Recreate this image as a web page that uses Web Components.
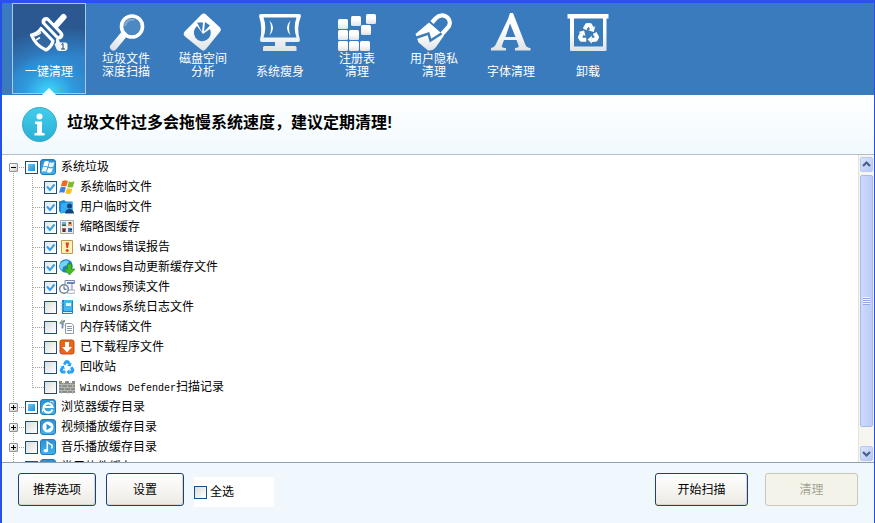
<!DOCTYPE html>
<html lang="zh-CN">
<head>
<meta charset="utf-8">
<title>垃圾清理</title>
<style>
html,body{margin:0;height:100%}
body{font:12px/20px "Liberation Sans","Noto Sans CJK SC",sans-serif;color:#000;overflow:hidden}
</style>
</head>
<body>
<cleaner-window>
  <tool-bar slot="toolbar">
    <tool-item icon="brush" active>一键清理</tool-item>
    <tool-item icon="lens">垃圾文件<br>深度扫描</tool-item>
    <tool-item icon="disk">磁盘空间<br>分析</tool-item>
    <tool-item icon="slim">系统瘦身</tool-item>
    <tool-item icon="registry">注册表<br>清理</tool-item>
    <tool-item icon="lock">用户隐私<br>清理</tool-item>
    <tool-item icon="font">字体清理</tool-item>
    <tool-item icon="bin">卸载</tool-item>
  </tool-bar>
  <info-banner slot="banner">垃圾文件过多会拖慢系统速度，建议定期清理!</info-banner>
  <tree-view slot="tree">
    <tree-item label="系统垃圾" icon="sys" state="mixed" open>
      <tree-item child label="系统临时文件" icon="flag" state="on"></tree-item>
      <tree-item child label="用户临时文件" icon="user" state="on"></tree-item>
      <tree-item child label="缩略图缓存" icon="thumbs" state="on"></tree-item>
      <tree-item child label="Windows错误报告" icon="error" state="on"></tree-item>
      <tree-item child label="Windows自动更新缓存文件" icon="update" state="on"></tree-item>
      <tree-item child label="Windows预读文件" icon="prefetch" state="on"></tree-item>
      <tree-item child label="Windows系统日志文件" icon="log"></tree-item>
      <tree-item child label="内存转储文件" icon="dump"></tree-item>
      <tree-item child label="已下载程序文件" icon="down"></tree-item>
      <tree-item child label="回收站" icon="recycle"></tree-item>
      <tree-item child last label="Windows Defender扫描记录" icon="wall"></tree-item>
    </tree-item>
    <tree-item label="浏览器缓存目录" icon="ie" state="mixed"></tree-item>
    <tree-item label="视频播放缓存目录" icon="video"></tree-item>
    <tree-item label="音乐播放缓存目录" icon="music"></tree-item>
    <tree-item label="常用软件缓存" icon="apps"></tree-item>
  </tree-view>
  <action-bar slot="actions">
    <push-button>推荐选项</push-button>
    <push-button>设置</push-button>
    <select-all>全选</select-all>
    <push-button slot="end" wide>开始扫描</push-button>
    <push-button slot="end" wide disabled>清理</push-button>
  </action-bar>
</cleaner-window>

<script>
const svg=(box,body)=>`<svg viewBox="0 0 ${box} ${box}" width="${box}" height="${box}" aria-hidden="true">${body}</svg>`;
const arrows=(cx,cy,s,fill)=>[0,120,240].map(r=>`<g transform="translate(${cx} ${cy}) rotate(${r}) scale(${s})"><path d="M-3.400-4.200-1.300-7.800H1.300L3-4.900" fill="none" stroke="${fill}" stroke-width="3.600" stroke-linejoin="round"/><path d="M5.800-6.700 4.600-1.800-.2-3.200z" fill="${fill}"/></g>`).join('');
const grad=`<defs><linearGradient id="g" x1="0" y1="0" x2="0" y2="1"><stop offset=".4" stop-color="#fff"/><stop offset="1" stop-color="#dfe3e6"/></linearGradient></defs>`;
const BIG={
brush:`<path d="M26 13.500 34.500 4" stroke="#fff" stroke-width="6" stroke-linecap="round"/>
<path d="m17 8.500 13 13.500" stroke="#fff" stroke-width="9" stroke-linecap="round"/>
<path d="m17.500 9 12 12.500" stroke="#2f629c" stroke-width="2.600" stroke-linecap="round"/>
<path d="m12 15.500 12 12.500c-1 4-3.500 7-7 9-6.500-3-12-8-14.500-15 3.500-1 7.500-3 9.500-6.500z" fill="#33659e" stroke="#fff" stroke-width="3.200" stroke-linejoin="round"/>
<path d="m5 23c3-.5 5.500-2 7-3.500M7 27l4-2.500" stroke="#fff" stroke-width="1.500" fill="none"/>
<path d="M27 26c1-1 2.500-.5 3 1l1 2.500h5c2 0 2.500 1 2.500 3v3c0 1.500-1.500 2.500-3 2.500h-5c-2 0-3-1.500-3.500-3l-1.500-4 1.500-1z" fill="#f4f8fb"/>
<path d="m32.500 31.500 1.500-1v5.500m-2 0h4" stroke="#246" fill="none"/>`,
lens:`<circle cx="26" cy="13.500" r="10.500" fill="#4c88c3" stroke="#fff" stroke-width="3.600"/><path d="M19 13a7 7 0 0 1 9-6" stroke="#80aad4" stroke-width="2" fill="none"/><path d="M17.500 22 7.500 34" stroke="url(#g2)" stroke-width="7" stroke-linecap="round"/><defs><linearGradient id="g2" gradientUnits="userSpaceOnUse" x1="17" y1="20" x2="6" y2="36"><stop stop-color="#fff"/><stop offset="1" stop-color="#dde1e6"/></linearGradient></defs>`,
disk:grad+`<path d="M18.500 1.500q2.500-2 5 .5l13 12q2.500 2.500.3 5L23 36q-2.500 3-5 .5L2 23.500q-2.500-2.500-.3-5z" fill="url(#g)"/><path d="M14 13A8.500 8.500 0 1 0 27 16L20 21z" fill="#3a7cba"/><path d="M19 19 14 9.500h6zM21 18.500 22 9l5 3.500z" fill="#3a7cba"/>`,
slim:grad+`<path d="M-1 3q0-2 2-2h38q2 0 2 2-5 12-1 24 0 2-2 2H25.500v4H35q1.500 0 1.500 1.500V38H3v-3.500Q3 33 4.500 33H15v-4H2q-2 0-2-2Q3 15-1 3z" fill="url(#g)"/><path d="M3.500 4.500h33q-3.500 10 0 20h-33q3.500-10 0-20z" fill="#3a7cba"/><path d="M9.500 7.500q7 7 0 15 3-7.500 0-15zM30.500 7.500q-7 7 0 15-3-7.500 0-15z" fill="#fff"/>`,
registry:grad+[[1,6],[14,3],[29,1],[1,17],[12,17],[24,12],[1,28],[12,28],[23,28]].map(([x,y])=>`<rect x="${x}" y="${y}" width="10" height="10" rx="1.500" fill="url(#g)"/>`).join(''),
lock:grad+`<path d="M18 9.500 21.500 5.500c4-4 9-4 12-1s3.500 7-.5 11L28 21" fill="none" stroke="#fff" stroke-width="4.200"/><path d="M1.500 21 15 9.500 30 22.500 22 34q-3 4-8 3.500L4.500 29.500z" fill="url(#g)"/><path d="M0 25.500 14.500 20.500 16.500 27.500 27.500 20.500" fill="none" stroke="#3a7cba" stroke-width="2.400"/>`,
font:grad+`<path fill-rule="evenodd" fill="url(#g)" d="m22 0 12.500 32q1 2.500 5 3v2.500H24V35q4.500 0 3.500-2.500L25.500 27H13l-2 5.500q-1 2.500 4 2.500v2.500H0V35q3.500-.5 5-4L17 6l2-6zM19 10.500 14.500 24h10z"/>`,
bin:grad+`<path d="M-.5 1h41v4.500h-2V37q0 1-1 1H3q-1 0-1-1V5.500H-.5z" fill="url(#g)"/><path d="M6 5.500h29v28H6z" fill="#3a7cba"/>`+arrows(20.5,21,1.150,'#fff')
};
const tile=`<defs><linearGradient id="t" x1="0" y1="0" x2="0" y2="1"><stop stop-color="#2f8fd2"/><stop offset="1" stop-color="#3db4ec"/></linearGradient></defs><rect x=".5" y=".5" width="15" height="15" rx="2.500" fill="url(#t)" stroke="#2879b8"/>`;
const flag=(a,b,c,d)=>`<path fill="${a}" d="M3.500 2.500q2.500-1.500 5 0L7 7.500q-2.500-1-5 0z"/><path fill="${b}" d="M9.200 3q2.500 1 5.300-.3L13 8q-2.500 1-5 0z"/><path fill="${c}" d="M1.800 8.500q2.500-1.300 4.800 0L5.200 13.300q-2.400-1.200-4.800 0z"/><path fill="${d}" d="M7.600 9q2.500 1.200 5 .2l-1.300 4.500q-2.600 1.200-5.200 0z"/>`;
const SMALL={
sys:tile+`<g transform="translate(1.200 .5) scale(.92)">${flag('#fff','#e9f6ff','#eef8ff','#fff')}</g>`,
flag:`<g transform="translate(-.4 -.8) scale(1.100)">${flag('#ed6a22','#7dbb2d','#3c83dc','#f8bf22')}</g>`,
user:`<path d="M0 2.500 5 1l2 1.500h6.500V13L2 14.500 0 12z" fill="#1c87d8"/><path d="M2 4.500 13.500 3v10L2 14z" fill="#35aeed"/><circle cx="10.500" cy="7" r="2.500" fill="#14437d"/><path d="M6 14.500q.5-4.500 4.500-4.500t4.500 4.500z" fill="#14437d"/>`,
thumbs:`<path d="M1.500 1.500h13v13h-13z" fill="#eee" stroke="#aaa"/><path d="M3 3h4v4H3z" fill="#69b8d8"/><path d="M9 3h4v4H9z" fill="#e9a07c"/><path d="M3 9h4v4H3z" fill="#c66a55"/><path d="M9 9h4v4H9z" fill="#3e79be"/><path d="M3 5.500h4V7H3zM10 3h2v2h-2z" fill="#335f43"/><path d="M4 10h2v3H4zM11 10h2v1h-2z" fill="#243b6c"/>`,
error:`<path d="M2.500 1.500h11v13h-11z" fill="#fff3bd" stroke="#c09a4c"/><path d="M6.500 3.500h3.500L9 9H7.500z" fill="#e3401c"/><circle cx="8.200" cy="11.500" r="1.500" fill="#e3401c"/>`,
update:`<circle cx="7" cy="7" r="6.800" fill="#217fcb"/><path d="M1 5q4-5 9-3L8 6 4 8 3 12Q0 9 1 5z" fill="#74d2fa"/><path d="M8.500 5h4v5H16l-5.500 6L5 10h3.500z" fill="#44bd23" stroke="#258b16" stroke-width=".6"/>`,
prefetch:`<path d="M6 1.500h9.500v3H13v9H6z" fill="#f3f6fb" stroke="#7888a7"/><path d="M8 3h7v2H8z" fill="#6687bb"/><path d="M8 11h8v3q-4 1-8 0z" fill="#fff" stroke="#8391aa" stroke-width=".7"/><circle cx="5" cy="10" r="4.300" fill="#fff" stroke="#6c8193" stroke-width="1.400"/><path d="M5 7.200v3h2.500" stroke="#356" fill="none"/>`,
log:`<path d="M3 1h10q1 0 1 1v12q0 1-1 1H3z" fill="#1987cb"/><path d="M5 1h8v11H5z" fill="#43b7ee"/><path d="M7 4h5v3H7z" fill="#e8f8ff"/><path d="M1.500 4h3m-3 3h3m-3 3h3" stroke="#80b8dd"/><path d="M4 13.500h9" stroke="#dff4ff"/>`,
dump:`<path d="M6.500 4.500h6l2 2v8h-8z" fill="#fff" stroke="#8f9aaa"/><path d="M8 7.500h5m-5 2h5m-5 2h5" stroke="#8798b0"/><path d="M3.500 9.500V5Q3.500 2 6 2" stroke="#778da1" stroke-width="1.800" fill="none"/><path d="M0 4.500 3.500 0v3.500L6 6.500z" fill="#8b9baa"/>`,
down:`<rect x="1" y="1" width="14" height="14" rx="2" fill="#e9651c" stroke="#c64d11"/><path d="M6 3h4v5h3l-5 5.500L3 8h3z" fill="#fff"/>`,
recycle:arrows(8,9,.8,'#279ff4'),
wall:`<path d="M0 2h3v2h3V2h4v2h3V2h3v12H0z" fill="#8c8e8c"/><path d="M0 5.500h16M0 8.500h16M0 11.500h16M4.500 3v3m7-3v3M2.500 6v3m6-3v3m5-3v3m-8 0v3m6-3v3m-9 0v3m6-3v3m5-3v3" stroke="#bdbeb8" stroke-width=".8"/>`,
ie:tile+`<path d="M12.500 10.500A4.600 4.600 0 1 1 12.600 8H5" fill="none" stroke="#fff" stroke-width="2.200"/><path d="M3 13Q1 12 5 7M10 3q4-2 3 1.500" stroke="#fff" fill="none"/>`,
video:tile+`<circle cx="8" cy="8" r="5.500" fill="#fff"/><path d="m6.500 4.800 4.800 3.200-4.800 3.200z" fill="#2797dc"/>`,
music:tile+`<path d="M7.300 11V3q3 2.500 4.700 3 .8 2-.7 3.500" fill="none" stroke="#fff" stroke-width="1.500"/><ellipse cx="5.800" cy="11.700" rx="2.300" ry="1.600" fill="#fff"/>`,
apps:tile+`<path d="M4 3.500h8v9H4z" fill="#fff"/>`
};
const CHECK=`
input{appearance:none;flex:none;box-sizing:border-box;width:13px;height:13px;margin:0;border:1px solid #1c4d86;background:linear-gradient(135deg,#dcdcd7,#fff)}
input:checked{background:url("data:image/svg+xml,%3Csvg xmlns='http://www.w3.org/2000/svg' viewBox='0 0 11 11'%3E%3Cpath d='m2 4.500 3 3.500 4.500-5.500' fill='none' stroke='%2335a0e2' stroke-width='2'/%3E%3C/svg%3E") center/11px 11px,linear-gradient(135deg,#e4e8ea,#fff)}
input:indeterminate{background:linear-gradient(135deg,#6cc7f5,#1b8fdb) center/7px 7px no-repeat,#fff}`;
const define=(name,render,after)=>customElements.define(name,class extends HTMLElement{
  connectedCallback(){ if(this.shadowRoot) return; this.attachShadow({mode:'open'}).innerHTML=render(this); after&&after(this,this.shadowRoot); }
});

define('cleaner-window',()=>`<style>
:host{display:flex;flex-direction:column;box-sizing:border-box;height:100vh;border:solid #2450e4;border-width:3px 1px 0 2px;border-top-color:#2c50ee;background:#fff}
</style><slot name="toolbar"></slot><slot name="banner"></slot><slot name="tree"></slot><slot name="actions"></slot>`);

define('tool-bar',()=>`<style>
:host{display:block;flex:none;background:#3a7bbd}
nav{display:flex;gap:3px;padding:0 10px 1px}
</style><nav><slot></slot></nav>`);

define('tool-item',el=>`<style>
:host{display:block;flex:none;width:74px}
button{position:relative;display:flex;flex-direction:column;align-items:center;box-sizing:border-box;width:100%;padding:9px 0 14px;border:1px solid transparent;background:none;color:#fff;font:inherit;line-height:13px}
svg{display:block;overflow:visible;fill:none}
.label{display:flex;align-items:flex-end;justify-content:center;height:26px;text-align:center;white-space:nowrap}
:host([active]) button{border-color:#a9c9e6;background:radial-gradient(ellipse 44px 40px at 50% 100%,#3ddcff,#2fa4e4aa 55%,transparent),radial-gradient(ellipse 100px 66px at 75% 100%,#2f84cb 55%,transparent 100%),#2b5890}
:host([active]) button::after{content:"";position:absolute;left:50%;bottom:-2px;margin-left:-7px;border:solid transparent;border-width:0 7px 7px;border-bottom-color:#fff}
</style><button type="button">${svg(40,BIG[el.getAttribute('icon')])}<span class="label"><span><slot></slot></span></span></button>`);

define('info-banner',()=>`<style>
:host{display:flex;flex:none;align-items:center;gap:10px;padding:12px 20px;border-bottom:1px solid #b5bdc9;background:linear-gradient(#fff,#f0f9fe)}
svg{display:block;flex:none}
h1{margin:0;padding-bottom:4px;font-size:16px;line-height:24px;font-weight:700}
</style>${svg(35,`<defs><linearGradient id="i" x1="0" y1="0" x2="0" y2="1"><stop stop-color="#43cdea"/><stop offset="1" stop-color="#28b0d6"/></linearGradient></defs><circle cx="17.500" cy="17.500" r="17" fill="url(#i)" stroke="#3aa9c8"/><circle cx="17.500" cy="9.500" r="3" fill="#fff"/><path d="M13 14.500h7V26h2.500v2.500h-10V26H15v-9h-2z" fill="#fff"/>`)}<h1><slot></slot></h1>`);

define('tree-view',()=>`<style>
:host{display:flex;flex:1;min-height:0;background:#fff}
.items{flex:1;min-width:0;overflow:hidden;padding-top:2px}
</style><div class="items"><slot></slot></div><scroll-bar></scroll-bar>`);

define('tree-item',el=>{
  const label=el.getAttribute('label').replace(/[A-Za-z][A-Za-z ]*/g,'<span class="latin">$&</span>');
  const child=el.hasAttribute('child');
  return `<style>
:host{display:block;--dots-v:repeating-linear-gradient(#a5a598 0 1px,transparent 1px 2px);--dots-h:repeating-linear-gradient(90deg,#a5a598 0 1px,transparent 1px 2px)}
.row{display:flex;align-items:center;height:20px;padding-left:7px;background:var(--dots-v) 11px 0/1px 100% no-repeat,var(--dots-h) 17px 10px/6px 1px no-repeat}
:host([open]) .row{background:var(--dots-v) 11px 10px/1px 10px no-repeat,var(--dots-h) 17px 10px/6px 1px no-repeat}
.row.child{padding-left:42px;background:var(--dots-v) 11px 0/1px 100% no-repeat,var(--dots-v) 30px 0/1px 100% no-repeat,var(--dots-h) 31px 10px/11px 1px no-repeat}
:host([last]) .row.child{background:var(--dots-v) 11px 0/1px 100% no-repeat,var(--dots-v) 30px 0/1px 11px no-repeat,var(--dots-h) 31px 10px/11px 1px no-repeat}
button{display:grid;place-items:center;flex:none;width:9px;height:9px;margin:0 7px 0 0;padding:0;border:1px solid #8a94a0;border-radius:1px;box-sizing:border-box;background:linear-gradient(135deg,#fff,#d4d0c4)}
button::before{content:"";width:5px;height:5px;background:linear-gradient(#000,#000) center/5px 1px no-repeat,linear-gradient(#000,#000) center/1px 5px no-repeat}
:host([open]) button::before{background:linear-gradient(#000,#000) center/5px 1px no-repeat}
${CHECK}
label{display:flex;align-items:center;gap:5px;margin-left:2px;white-space:nowrap}
svg{display:block;flex:none}
.latin{font:10px "Liberation Mono",monospace}
</style><div class="row${child?' child':''}">${child?'':'<button type="button" aria-label="展开或折叠"></button>'}<input type="checkbox" id="c"><label for="c">${svg(16,SMALL[el.getAttribute('icon')])}<span>${label}</span></label></div><slot></slot>`;
},(el,root)=>{
  const box=root.querySelector('input'),s=el.getAttribute('state');
  box.checked=s==='on'; box.indeterminate=s==='mixed';
});

define('scroll-bar',()=>`<style>
:host{display:flex;flex:none;flex-direction:column;box-sizing:border-box;width:16px;padding:2px 1px 1px;gap:3px;border-left:1px solid #e6e3d6;background:#f6f5f0}
button{display:grid;place-items:center;flex:none;box-sizing:border-box;height:15px;padding:0;border:1px solid #b8c8f4;border-radius:2px;background:linear-gradient(135deg,#dbe5ff,#b5c7f8)}
svg{display:block}
.track{flex:1;display:flex;flex-direction:column}
.thumb{display:grid;place-items:center;height:94%;box-sizing:border-box;border:1px solid #a8b9ee;border-radius:2px;background:linear-gradient(90deg,#cddbff,#bccbf8)}
.grip{width:7px;height:8px;background:repeating-linear-gradient(#f0f5ff 0 1px,#91a8e4 1px 2px)}
</style><button type="button" aria-label="向上">${svg(9,'<path d="m1 6 3.500-3.500L8 6" fill="none" stroke="#4b5f8c" stroke-width="2.200"/>')}</button><div class="track"><div class="thumb"><div class="grip"></div></div></div><button type="button" aria-label="向下">${svg(9,'<path d="m1 3 3.500 3.500L8 3" fill="none" stroke="#4b5f8c" stroke-width="2.200"/>')}</button>`);

define('action-bar',()=>`<style>
:host{display:flex;flex:none;justify-content:space-between;padding:10px 16px 16px;border-top:1px solid #8f9fb2;background:#f0f8fe}
div{display:flex;align-items:flex-start;gap:10px}
.end{gap:17px}
</style><div><slot></slot></div><div class="end"><slot name="end"></slot></div>`);

define('push-button',el=>`<style>
:host{display:block;width:78px}
:host([wide]){width:93px}
button{display:block;box-sizing:border-box;width:100%;height:33px;padding:0;border:1px solid #1b407c;border-radius:3px;background:linear-gradient(#fff,#f4f3ee 60%,#ebe9e1);box-shadow:inset -1px -1px #d9d5c9;color:#000;font:inherit}
button:disabled{border-color:#c9c7ba;background:#f4f3e9;box-shadow:none;color:#a6a495}
</style><button type="button"${el.hasAttribute('disabled')?' disabled':''}><slot></slot></button>`);

define('select-all',()=>`<style>
:host{display:flex;align-items:center;gap:3px;box-sizing:border-box;width:80px;height:30px;margin-top:4px;background:#fff}
${CHECK}
label{line-height:20px}
</style><input type="checkbox" id="all"><label for="all"><slot></slot></label>`);
</script>
</body>
</html>
